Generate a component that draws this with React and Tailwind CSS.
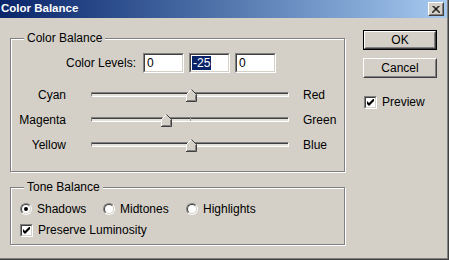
const face = 'bg-[#d4d0c8]'

const sliders = [
  { left: 'Cyan', right: 'Red', value: 0 },
  { left: 'Magenta', right: 'Green', value: -25 },
  { left: 'Yellow', right: 'Blue', value: 0 },
]

const TRACK_W = 198

function GroupBox({ title, className, children }) {
  return (
    <div
      className={`relative border border-[#808080] shadow-[inset_1px_1px_0_#fff,1px_1px_0_#fff] ${className}`}
    >
      <span className={`absolute left-[13px] top-[-8px] ${face} px-[3px] leading-[14px]`}>
        {title}
      </span>
      {children}
    </div>
  )
}

function Field({ children }) {
  return (
    <div className="h-[20px] w-[41px] border border-t-[#808080] border-l-[#808080] border-b-white border-r-white">
      <div className="flex h-full items-center border border-t-[#404040] border-l-[#404040] border-b-[#d4d0c8] border-r-[#d4d0c8] bg-white pl-[1px] leading-[14px]">
        {children}
      </div>
    </div>
  )
}

function Thumb() {
  return (
    <svg width="11" height="13" viewBox="0 0 11 13" className="block">
      <path d="M0.5 12.5 V5.5 L5.5 0.5 L10.5 5.5 V12.5 Z" fill="#d4d0c8" />
      <path d="M0.5 12 V5.5 L5.5 0.5" fill="none" stroke="#fff" />
      <path d="M5.5 0.5 L10.5 5.5 V12.5 H0" fill="none" stroke="#404040" />
      <path d="M1 11.5 H9.5 V6" fill="none" stroke="#808080" />
    </svg>
  )
}

function Slider({ value, tick }) {
  const pos = ((value + 100) / 200) * TRACK_W - 5.5
  return (
    <div className="relative h-[5px] w-[198px] border border-t-[#808080] border-l-[#808080] border-b-white border-r-white">
      <div className="h-full border-t border-[#404040] bg-[#e4e1da]" />
      {tick && <div className="absolute left-[98px] top-0 h-[3px] w-px bg-[#a0a0a0]" />}
      <div className="absolute top-[-4px]" style={{ left: pos }}>
        <Thumb />
      </div>
    </div>
  )
}

function Radio({ checked }) {
  return (
    <div className="h-[12px] w-[12px] rounded-full border border-t-[#808080] border-l-[#808080] border-b-white border-r-white">
      <div className="flex h-full w-full items-center justify-center rounded-full border border-t-[#404040] border-l-[#404040] border-b-[#d4d0c8] border-r-[#d4d0c8] bg-white">
        {checked && <div className="h-[4px] w-[4px] rounded-full bg-black" />}
      </div>
    </div>
  )
}

function Check() {
  return (
    <div className="h-[13px] w-[13px] border border-t-[#808080] border-l-[#808080] border-b-white border-r-white">
      <div className="flex h-full w-full items-center justify-center border border-t-[#404040] border-l-[#404040] border-b-[#d4d0c8] border-r-[#d4d0c8] bg-white">
        <svg width="7" height="7" viewBox="0 0 7 7" className="block">
          <path d="M0 2 L2 4 L7 -1 V2 L2 7 L0 5 Z" fill="#000" />
        </svg>
      </div>
    </div>
  )
}

function Button({ children, isDefault }) {
  return (
    <div className={`h-[20px] w-[74px] ${face} ${isDefault ? 'border border-black' : ''}`}>
      <div className="flex h-full w-full items-center justify-center border border-t-white border-l-white border-b-[#404040] border-r-[#404040]">
        <div className="flex h-full w-full items-center justify-center border border-t-[#d4d0c8] border-l-[#d4d0c8] border-b-[#808080] border-r-[#808080]">
          {children}
        </div>
      </div>
    </div>
  )
}

export default function App() {
  return (
    <div className="h-[260px] w-[449px] border-b border-r border-[#404040] font-['Liberation_Sans',Arial,sans-serif] text-[12px] text-black">
      <div className={`h-[259px] w-[448px] border-b border-r border-[#808080] ${face}`}>
        <div className="flex h-[18px] items-center justify-between bg-gradient-to-r from-[#0a246a] to-[#a6caf0] pl-[1px] pr-[3px]">
          <span className="text-[11.5px] font-bold text-white">Color Balance</span>
          <div className={`h-[14px] w-[16px] ${face} border border-t-white border-l-white border-b-[#404040] border-r-[#404040]`}>
            <div className="flex h-full w-full items-center justify-center border border-t-[#d4d0c8] border-l-[#d4d0c8] border-b-[#808080] border-r-[#808080]">
              <svg width="8" height="7" viewBox="0 0 8 7" className="block">
                <path d="M0.5 0 L7.5 7 M1.5 0 L8.5 7 M7.5 0 L0.5 7 M6.5 0 L-0.5 7" stroke="#000" strokeWidth="1" />
              </svg>
            </div>
          </div>
        </div>

        <div className="flex pl-[10px]">
          <div className="mt-[20px] w-[335px]">
            <GroupBox title="Color Balance" className="h-[134px]">
              <div className="mt-[14px] flex items-center">
                <span className="w-[125px] text-right">Color Levels:</span>
                <div className="ml-[7px] flex gap-[5px]">
                  <Field>
                    <span className="pl-[1px]">0</span>
                  </Field>
                  <Field>
                    <span className="bg-[#0a246a] px-[1px] text-white">-25</span>
                  </Field>
                  <Field>
                    <span className="pl-[1px]">0</span>
                  </Field>
                </div>
              </div>
              <div className="mt-[9px]">
                {sliders.map((s) => (
                  <div key={s.left} className="flex h-[25px] items-center">
                    <span className="w-[55px] text-right">{s.left}</span>
                    <div className="ml-[25px]">
                      <Slider value={s.value} tick={s.value !== 0} />
                    </div>
                    <span className="ml-[14px]">{s.right}</span>
                  </div>
                ))}
              </div>
            </GroupBox>

            <GroupBox title="Tone Balance" className="mt-[15px] h-[58px]">
              <div className="mt-[14px] flex h-[13px] items-center pl-[9px]">
                {[
                  ['Shadows', true],
                  ['Midtones', false],
                  ['Highlights', false],
                ].map(([label, on]) => (
                  <div key={label} className="flex w-[83px] items-center gap-[5px]">
                    <Radio checked={on} />
                    <span>{label}</span>
                  </div>
                ))}
              </div>
              <div className="mt-[6px] flex items-center gap-[5px] pl-[9px]">
                <Check />
                <span>Preserve Luminosity</span>
              </div>
            </GroupBox>
          </div>

          <div className="ml-[18px] mt-[12px] flex flex-col">
            <Button isDefault>OK</Button>
            <div className="mt-[8px]">
              <Button>Cancel</Button>
            </div>
            <div className="ml-[1px] mt-[15px] flex items-center gap-[5px]">
              <Check />
              <span>Preview</span>
            </div>
          </div>
        </div>
      </div>
    </div>
  )
}
